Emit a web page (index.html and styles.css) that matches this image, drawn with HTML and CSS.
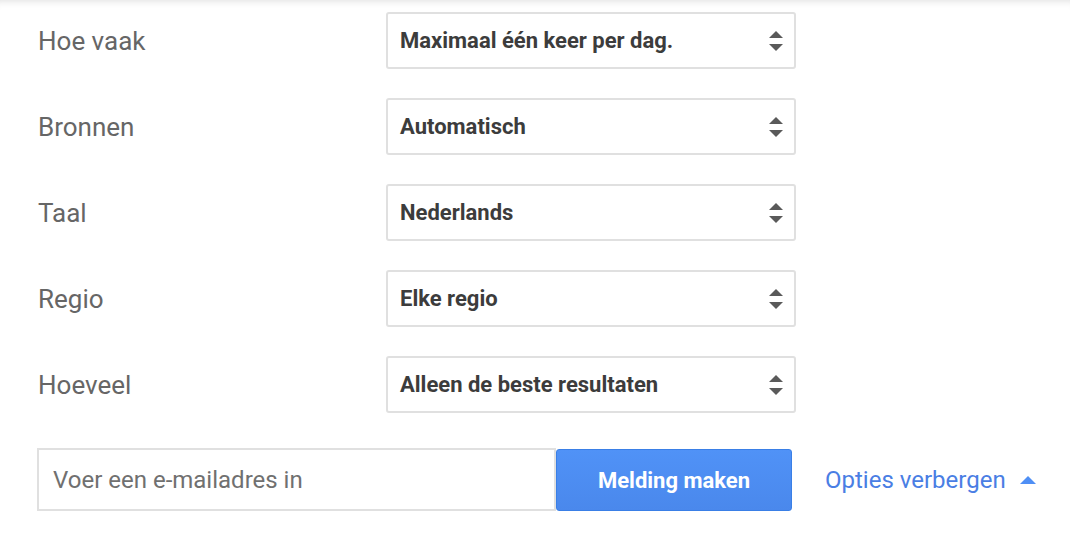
FILE: index.html
```html
<!DOCTYPE html>
<html lang="nl">
  <head>
    <meta charset="UTF-8" />
    <title>Melding opties</title>
    <link rel="stylesheet" href="styles.css">
  </head>
  <body>
    <div id="app">
      <div class="options">
        <div class="option">
          <span class="option-label">Hoe vaak</span>
          <div class="select">
            <span>Maximaal één keer per dag.</span>
            <span class="select-arrows"></span>
          </div>
        </div>
        <div class="option">
          <span class="option-label">Bronnen</span>
          <div class="select">
            <span>Automatisch</span>
            <span class="select-arrows"></span>
          </div>
        </div>
        <div class="option">
          <span class="option-label">Taal</span>
          <div class="select">
            <span>Nederlands</span>
            <span class="select-arrows"></span>
          </div>
        </div>
        <div class="option">
          <span class="option-label">Regio</span>
          <div class="select">
            <span>Elke regio</span>
            <span class="select-arrows"></span>
          </div>
        </div>
        <div class="option">
          <span class="option-label">Hoeveel</span>
          <div class="select">
            <span>Alleen de beste resultaten</span>
            <span class="select-arrows"></span>
          </div>
        </div>
      </div>

      <div class="create">
        <input class="email" type="text" placeholder="Voer een e-mailadres in" />
        <button class="create-button">Melding maken</button>
        <a class="toggle" href="#">Opties verbergen <span class="toggle-arrow"></span></a>
      </div>
    </div>
  </body>
</html>
```

FILE: styles.css
```css
body {
  margin: 0px;
  background: white;
  font-family: Roboto, "Liberation Sans", sans-serif;
}

#app {
  height: 550px;
  padding: 12px 0px 0px 37px;
  box-sizing: border-box;
  box-shadow: inset 0px 8px 8px -8px rgba(0, 0, 0, 0.16);
}

.options {
  gap: 29px;
  display: flex;
  flex-flow: column;
}

.option {
  display: flex;
  align-items: center;

  > .option-label {
    width: 349px;
    padding-left: 1px;
    box-sizing: border-box;
    color: #666;
    font-size: 26px;
  }
}

.select {
  width: 410px;
  height: 57px;
  display: flex;
  align-items: center;
  justify-content: space-between;
  padding: 0px 11px 0px 12px;
  box-sizing: border-box;
  border: 2px solid #e0e0e0;
  border-radius: 3px;
  color: #3c3c3c;
  font-size: 22px;
  font-weight: bold;
}

.select-arrows {
  gap: 6px;
  display: flex;
  flex-flow: column;

  &::before,
  &::after {
    content: "";
    border-left: 7px solid transparent;
    border-right: 7px solid transparent;
  }

  &::before {
    border-bottom: 7px solid #5a5a5a;
  }

  &::after {
    border-top: 7px solid #5a5a5a;
  }
}

.create {
  display: flex;
  align-items: center;
  margin-top: 35px;
}

.email {
  width: 519px;
  height: 63px;
  margin: 0px;
  padding: 0px 14px;
  box-sizing: border-box;
  border: 2px solid #e0e0e0;
  border-radius: 0px;
  outline: none;
  font-family: inherit;
  font-size: 24px;

  &::placeholder {
    color: #707070;
  }
}

.create-button {
  width: 236px;
  height: 62px;
  margin: 1px 0px 0px 0px;
  border: 1px solid #3a7fe6;
  border-radius: 3px;
  background: linear-gradient(#5092f7, #4a88ec);
  color: white;
  font-family: inherit;
  font-size: 22px;
  font-weight: bold;
}

.toggle {
  display: flex;
  align-items: center;
  gap: 14px;
  margin-left: 33px;
  color: #4a7ee4;
  font-size: 24px;
  text-decoration: none;
}

.toggle-arrow {
  border-left: 8px solid transparent;
  border-right: 8px solid transparent;
  border-bottom: 8px solid #4f8ff5;
}
```
